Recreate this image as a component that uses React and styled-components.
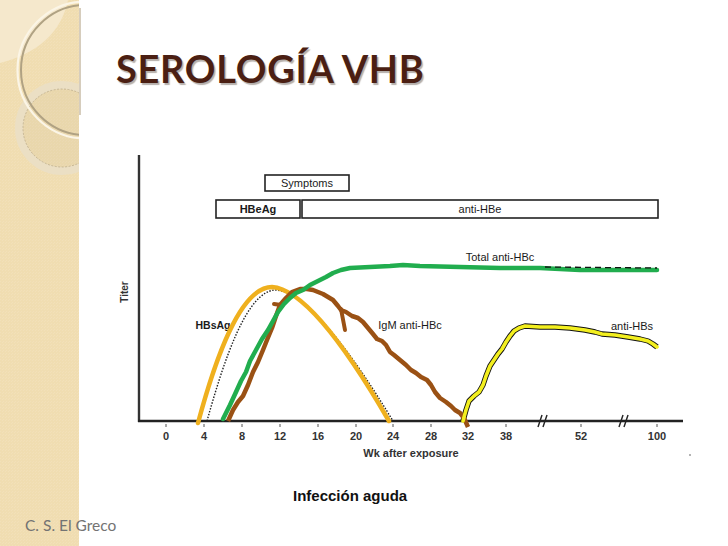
import styled, { createGlobalStyle } from "styled-components";
import React from "react";

const GlobalStyle = createGlobalStyle`
  html, body { margin: 0; padding: 0; background: #ffffff; }
  #root { width: 728px; height: 546px; overflow: hidden; }
`;

const Slide = styled.div`
  width: 728px;
  height: 546px;
  display: grid;
  grid-template-columns: 79px 1fr;
  grid-template-rows: 140px 335px 40px 1fr;
  background: #ffffff;
`;

const Strip = styled.div`
  grid-column: 1;
  grid-row: 1 / -1;
  background-color: #f0ddb1;
  background-image: linear-gradient(45deg, rgba(255, 255, 255, 0.1) 25%, transparent 25%, transparent 75%, rgba(255, 255, 255, 0.1) 75%);
  background-size: 3px 3px;
  overflow: visible;
`;

const Title = styled.h1`
  grid-column: 2;
  grid-row: 1;
  margin: 0;
  padding: 46px 0 0 37px;
  font-family: Lato, "Open Sans", sans-serif;
  font-weight: 700;
  font-size: 38px;
  line-height: 44px;
  color: #4b1f13;
  text-shadow: 1.5px 1.5px 1px rgba(70, 55, 45, 0.4);
  letter-spacing: 0.7px;
`;

const Figure = styled.div`
  grid-column: 2;
  grid-row: 2;
  svg { display: block; }
  text { font-family: "Liberation Sans", Arial, sans-serif; }
`;

const Caption = styled.div`
  grid-column: 2;
  grid-row: 3;
  padding-left: 214px;
  display: flex;
  align-items: center;
  font-family: "Liberation Sans", Arial, sans-serif;
  font-weight: 700;
  font-size: 15px;
  color: #111;
`;

const Footer = styled.div`
  grid-column: 1 / -1;
  grid-row: 4;
  padding: 0 0 0 25px;
  font-family: Lato, "Open Sans", sans-serif;
  font-size: 15.5px;
  line-height: 20px;
  color: #737373;
`;

const ticks = [
  [166, "0"], [204, "4"], [242, "8"], [280, "12"], [318, "16"], [356, "20"],
  [393, "24"], [431, "28"], [468, "32"], [506, "38"], [581, "52"], [657, "100"],
];

const green = "223,419 230,405 236,392 241,381 246,372 250,361 256,350 262,339 268,330 273,321 278,312 284,304 290,298 296,293 303,290 310,285 318,281 326,277 333,273 341,270 350,268 370,267 390,266 403,265 420,266 460,267 500,268 540,268 580,270 620,270 657,270";
const brown = "228,421 233,410 238,402 243,396 248,385 253,372 258,362 263,350 267,340 272,328 276,316 280,305 286,298 292,292 300,289 307,289 313,290 318,292 323,294 328,297 333,300 338,306 341,310 346,312 352,316 358,318 363,322 368,328 373,334 377,339 382,341 386,345 390,352 394,355 400,360 406,365 411,370 416,373 421,377 427,380 431,385 435,392 440,398 446,402 451,406 455,410 460,413 464,418 468,427";
const antiHbs = "463,421 466,410 469,401 474,396 479,392 483,385 486,376 490,366 494,360 498,354 502,349 506,342 510,336 514,331 519,328 525,326 540,327 555,327 570,328 585,330 595,332 602,334 615,335 628,337 640,339 648,341 653,344 657,347";

function StripArt() {
  return (
    <svg width="82" height="180" viewBox="0 0 82 180" style={{ display: "block", overflow: "visible" }}>
      <defs>
        <clipPath id="stripClip"><rect x="0" y="0" width="79" height="180" /></clipPath>
      </defs>
      <g clipPath="url(#stripClip)">
        <path d="M0,0 H68 Q58,48 0,63 Z" fill="#f5e8cc" />
        <circle cx="62" cy="128" r="43" fill="none" stroke="#ebdfc4" strokeWidth="8" />
        <circle cx="62" cy="128" r="39" fill="rgba(190,175,140,0.12)" stroke="#bcad8b" strokeWidth="0.8" strokeDasharray="2 1.5" />
        <circle cx="86" cy="70" r="68.5" fill="none" stroke="#fbf5e6" strokeWidth="2.2" />
        <circle cx="86" cy="70" r="65" fill="none" stroke="#b0a283" strokeWidth="2" />
      </g>
      <rect x="79" y="8" width="2" height="107" fill="#d6cdbd" />
    </svg>
  );
}

function Chart() {
  return (
    <svg width="649" height="335" viewBox="79 140 649 335">
      {/* boxes */}
      <rect x="265" y="175" width="84" height="16" fill="#fff" stroke="#222" strokeWidth="1.6" />
      <text x="307" y="187" fontSize="11" textAnchor="middle" fill="#1a1a1a">Symptoms</text>
      <rect x="216" y="200" width="84" height="18" fill="#fff" stroke="#222" strokeWidth="1.6" />
      <text x="258" y="213" fontSize="11" fontWeight="700" textAnchor="middle" fill="#1a1a1a">HBeAg</text>
      <rect x="302" y="200" width="356" height="18" fill="#fff" stroke="#222" strokeWidth="1.6" />
      <text x="480" y="213" fontSize="11" textAnchor="middle" fill="#1a1a1a">anti-HBe</text>

      {/* axes */}
      <line x1="139" y1="155" x2="139" y2="422" stroke="#333" strokeWidth="2.4" />
      <line x1="138" y1="421" x2="683" y2="421" stroke="#222" strokeWidth="2.4" />
      {ticks.map(([x, l]) => (
        <g key={l}>
          <line x1={x} y1="424" x2={x} y2="427" stroke="#555" strokeWidth="1" />
          <text x={x} y="440" fontSize="11" fontWeight="700" textAnchor="middle" fill="#333">{l}</text>
        </g>
      ))}
      <g stroke="#222" strokeWidth="1.4">
        <line x1="538" y1="427" x2="542" y2="415" />
        <line x1="543" y1="427" x2="547" y2="415" />
        <line x1="619" y1="427" x2="623" y2="415" />
        <line x1="624" y1="427" x2="628" y2="415" />
      </g>
      <text x="411" y="457" fontSize="11" fontWeight="700" textAnchor="middle" fill="#333">Wk after exposure</text>
      <text x="0" y="0" fontSize="10" fontWeight="700" fill="#333" textAnchor="middle" transform="translate(128 292) rotate(-90)">Titer</text>
      <circle cx="690" cy="455" r="0.8" fill="#555" />

      {/* labels */}
      <text x="213" y="329" fontSize="10.5" fontWeight="700" textAnchor="middle" fill="#1a1a1a">HBsAg</text>
      <text x="410" y="329" fontSize="11" textAnchor="middle" fill="#1a1a1a">IgM anti-HBc</text>
      <text x="500" y="261" fontSize="11" textAnchor="middle" fill="#1a1a1a">Total anti-HBc</text>
      <text x="632" y="330" fontSize="11" textAnchor="middle" fill="#1a1a1a">anti-HBs</text>

      {/* original black traces */}
      <path d="M207,421 C224,360 247,290 276,290 C306,292 350,350 393,421" fill="none" stroke="#222" strokeWidth="1.4" strokeDasharray="1.5 1.5" />
      <polyline points={antiHbs} fill="none" stroke="#111" strokeWidth="5.4" strokeLinejoin="round" />

      {/* coloured overlays */}
      <path d="M198,423 C215,360 240,287 272,287 C303,289 345,345 389,421" fill="none" stroke="#efb01e" strokeWidth="4.5" strokeLinecap="round" />
      <polyline points={brown} fill="none" stroke="#9a5114" strokeWidth="4.5" strokeLinejoin="round" />
      <path d="M281,305 L274,304 M341,309 L345,330" fill="none" stroke="#9a5114" strokeWidth="4" strokeLinecap="round" />
      <polyline points={green} fill="none" stroke="#21ad4e" strokeWidth="4.5" strokeLinejoin="round" strokeLinecap="round" />
      <path d="M545,267 L657,268" fill="none" stroke="#111" strokeWidth="1.3" strokeDasharray="6 4" />
      <polyline points={antiHbs} fill="none" stroke="#f3ef1f" strokeWidth="3.6" strokeLinejoin="round" strokeLinecap="round" />
    </svg>
  );
}

export default function App() {
  return (
    <>
      <GlobalStyle />
      <Slide>
        <Strip>
          <StripArt />
        </Strip>
        <Title>SEROLOGÍA VHB</Title>
        <Figure>
          <Chart />
        </Figure>
        <Caption>Infección aguda</Caption>
        <Footer>C. S. El Greco</Footer>
      </Slide>
    </>
  );
}
